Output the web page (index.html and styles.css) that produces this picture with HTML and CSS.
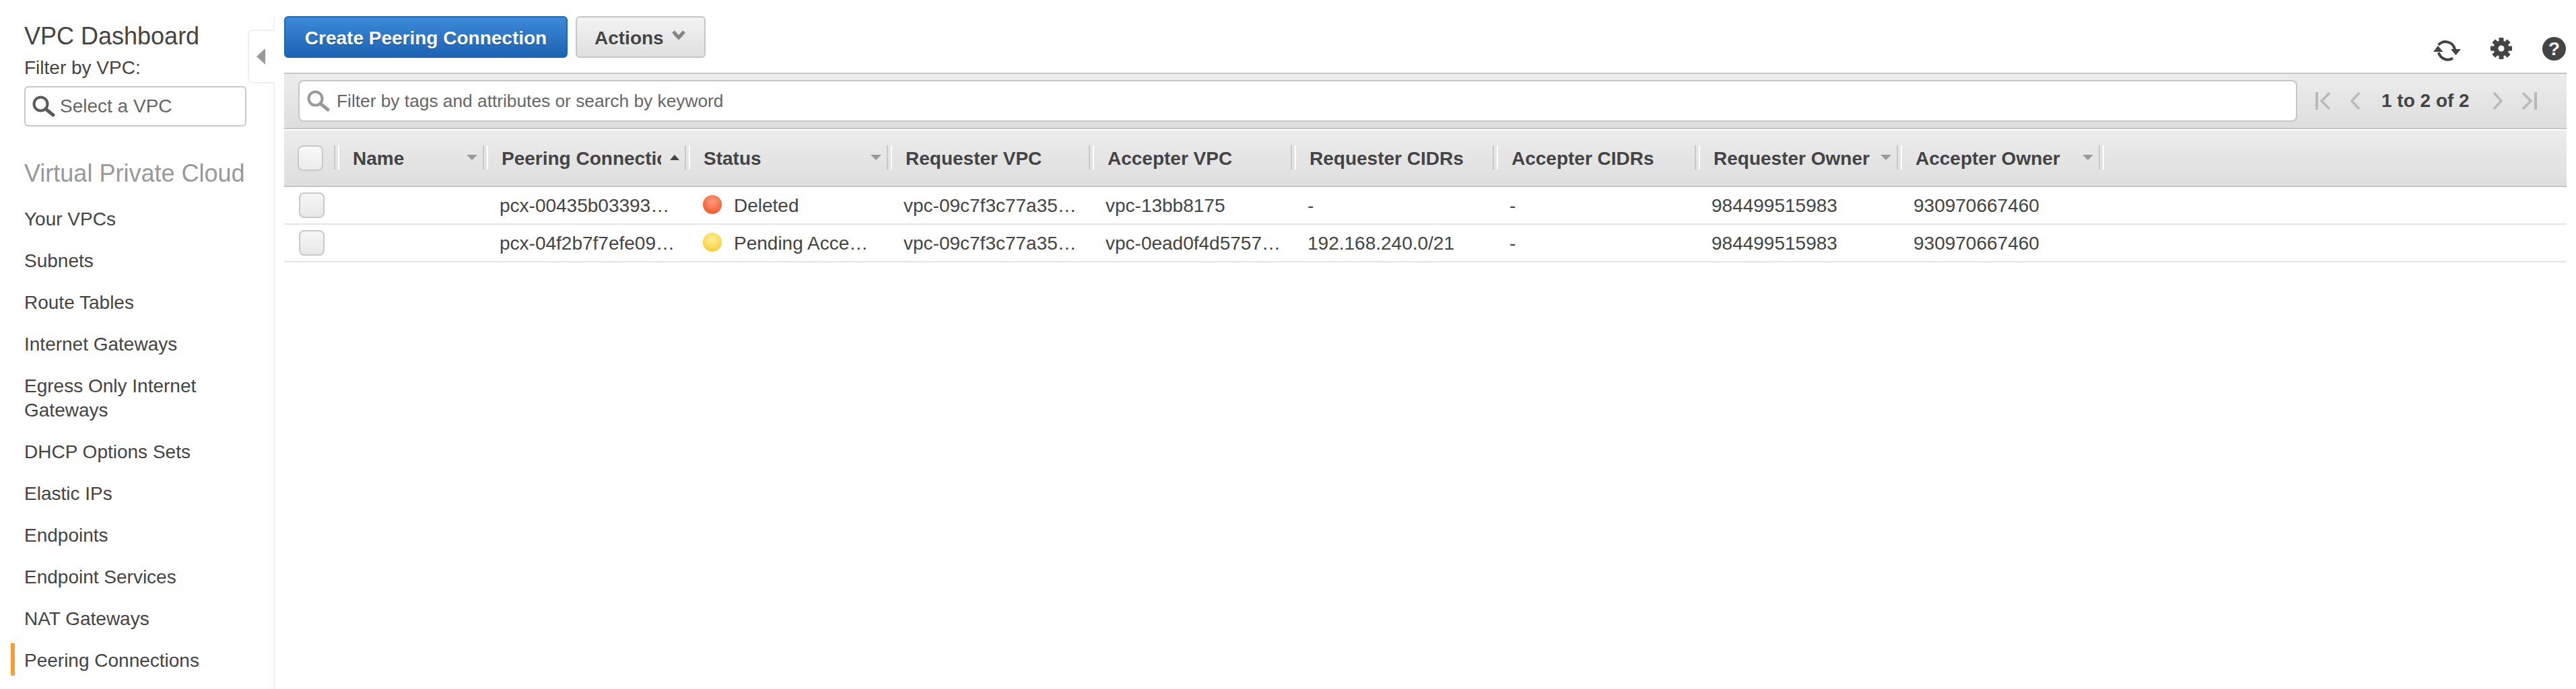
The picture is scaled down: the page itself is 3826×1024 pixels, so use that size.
FILE: index.html
```html
<!DOCTYPE html>
<html lang="en">
<head>
<meta charset="utf-8">
<title>Peering Connections</title>
<link rel="stylesheet" href="styles.css">
</head>
<body>
<aside class="sidebar">
  <h1 class="dash-title">VPC Dashboard</h1>
  <div class="filter-label">Filter by VPC:</div>
  <div class="vpc-select">
    <svg class="mag" viewBox="0 0 34 32"><circle cx="12.500" cy="12.500" r="10" fill="#fff" stroke="#5a5a5a" stroke-width="4"/><path d="M20 20l11 9" stroke="#5a5a5a" stroke-width="5" stroke-linecap="round"/></svg>
    <span>Select a VPC</span>
  </div>
  <h2 class="section-title">Virtual Private Cloud</h2>
  <nav class="nav">
    <a class="nav-item">Your VPCs</a>
    <a class="nav-item">Subnets</a>
    <a class="nav-item">Route Tables</a>
    <a class="nav-item">Internet Gateways</a>
    <a class="nav-item">Egress Only Internet Gateways</a>
    <a class="nav-item">DHCP Options Sets</a>
    <a class="nav-item">Elastic IPs</a>
    <a class="nav-item">Endpoints</a>
    <a class="nav-item">Endpoint Services</a>
    <a class="nav-item">NAT Gateways</a>
    <a class="nav-item active">Peering Connections</a>
  </nav>
  <div class="collapse-tab"><span class="collapse-arrow"></span></div>
</aside>
<main class="main">
  <div class="actions">
    <button class="btn primary">Create Peering Connection</button>
    <button class="btn secondary">Actions<svg class="caret" viewBox="0 0 20 14"><path d="M2 2l8 9 8-9" fill="none" stroke="#858585" stroke-width="5"/></svg></button>
    <div class="top-icons">
      <svg class="ic-refresh" viewBox="0 0 42 34"><path d="M8.700 9A14 14 0 0 1 33 15.500" fill="none" stroke="#444" stroke-width="4"/><path d="M9 20A14 14 0 0 0 30 28.500" fill="none" stroke="#444" stroke-width="4"/><path d="M27 15h15l-7.500 9zM1 19h14.500L8 10z" fill="#444"/></svg>
      <svg class="ic-gear" viewBox="0 0 32 32"><g fill="#444"><rect x="12.500" y="0" width="7" height="32" rx="1"/><rect x="12.500" y="0" width="7" height="32" rx="1" transform="rotate(45 16 16)"/><rect x="12.500" y="0" width="7" height="32" rx="1" transform="rotate(90 16 16)"/><rect x="12.500" y="0" width="7" height="32" rx="1" transform="rotate(135 16 16)"/><circle cx="16" cy="16" r="11.500"/></g><circle cx="16" cy="16" r="4.500" fill="#fff"/></svg>
      <span class="ic-help">?</span>
    </div>
  </div>
  <div class="filter-bar">
    <div class="filter-input">
      <svg class="mag" viewBox="0 0 34 32"><circle cx="12.500" cy="12.500" r="10" fill="#fff" stroke="#999" stroke-width="4"/><path d="M20 20l11 9" stroke="#999" stroke-width="5" stroke-linecap="round"/></svg>
      <span>Filter by tags and attributes or search by keyword</span>
    </div>
    <div class="pager">
      <svg class="pg" viewBox="0 0 24 28"><path d="M2 1v26" stroke="#b9b9b9" stroke-width="4"/><path d="M21 2L9 14l12 12" fill="none" stroke="#b9b9b9" stroke-width="3.500"/></svg>
      <svg class="pg pg-prev" viewBox="0 0 16 28"><path d="M14 2L3 14l11 12" fill="none" stroke="#b9b9b9" stroke-width="3.500"/></svg>
      <span class="pg-text">1 to 2 of 2</span>
      <svg class="pg pg-next" viewBox="0 0 16 28"><path d="M2 2l11 12L2 26" fill="none" stroke="#b9b9b9" stroke-width="3.500"/></svg>
      <svg class="pg" viewBox="0 0 24 28"><path d="M3 2l12 12L3 26" fill="none" stroke="#b9b9b9" stroke-width="3.500"/><path d="M22 1v26" stroke="#b9b9b9" stroke-width="4"/></svg>
    </div>
  </div>
  <div class="grid head">
    <div class="hcell check-cell"><span class="check head-check"></span></div>
    <div class="hcell"><span class="hlabel">Name</span><span class="sort"></span></div>
    <div class="hcell"><span class="hlabel">Peering Connection ID</span><span class="sort asc"></span></div>
    <div class="hcell"><span class="hlabel">Status</span><span class="sort"></span></div>
    <div class="hcell"><span class="hlabel">Requester VPC</span></div>
    <div class="hcell"><span class="hlabel">Accepter VPC</span></div>
    <div class="hcell"><span class="hlabel">Requester CIDRs</span></div>
    <div class="hcell"><span class="hlabel">Accepter CIDRs</span></div>
    <div class="hcell"><span class="hlabel">Requester Owner</span><span class="sort"></span></div>
    <div class="hcell"><span class="hlabel">Accepter Owner</span><span class="sort"></span></div>
  </div>
  <div class="grid row">
    <div class="cell check-cell"><span class="check"></span></div>
    <div class="cell"></div>
    <div class="cell">pcx-00435b03393…</div>
    <div class="cell"><span class="dot red"></span>Deleted</div>
    <div class="cell">vpc-09c7f3c77a35…</div>
    <div class="cell">vpc-13bb8175</div>
    <div class="cell">-</div>
    <div class="cell">-</div>
    <div class="cell">984499515983</div>
    <div class="cell">930970667460</div>
  </div>
  <div class="grid row">
    <div class="cell check-cell"><span class="check"></span></div>
    <div class="cell"></div>
    <div class="cell">pcx-04f2b7f7efe09…</div>
    <div class="cell"><span class="dot yellow"></span>Pending Acce…</div>
    <div class="cell">vpc-09c7f3c77a35…</div>
    <div class="cell">vpc-0ead0f4d5757…</div>
    <div class="cell">192.168.240.0/21</div>
    <div class="cell">-</div>
    <div class="cell">984499515983</div>
    <div class="cell">930970667460</div>
  </div>
</main>
</body>
</html>
```
FILE: styles.css
```css
* { box-sizing: border-box; }
html, body { margin: 0; height: 100%; overflow: hidden; }
body { display: flex; background: #fff; color: #444; font-family: "Liberation Sans", Arial, sans-serif; font-size: 28px; }

.sidebar { position: relative; flex: 0 0 408px; height: 1024px; padding: 33px 0 0 36px; }
.sidebar::after { content: ""; position: absolute; right: 0; top: 24px; bottom: 0; width: 2px; background: #f1f1f1; }
.dash-title { margin: 0; font-size: 36px; font-weight: 400; line-height: 42px; color: #444; }
.filter-label { margin-top: 8px; font-size: 28px; line-height: 36px; }
.vpc-select { display: flex; align-items: center; gap: 7px; width: 330px; height: 60px; margin-top: 9px; padding-left: 10px; border: 2px solid #c9c9c9; border-radius: 6px; font-size: 28px; color: #666; }
.mag { width: 34px; height: 32px; flex: none; }
.section-title { margin: 49px 0 0; font-size: 36px; font-weight: 400; line-height: 42px; color: #999; }
.nav { margin-top: 16px; }
.nav-item { position: relative; display: block; width: 300px; padding: 13px 0; font-size: 28px; line-height: 36px; color: #444; }
.nav-item.active::before { content: ""; position: absolute; left: -20px; top: 5px; width: 6px; height: 48px; background: #ff9a2e; }
.collapse-tab { position: absolute; z-index: 1; left: 368px; top: 44px; width: 40px; height: 80px; background: #fff; border: 2px solid #efefef; border-right: 0; border-radius: 8px 0 0 8px; display: flex; align-items: center; justify-content: center; }
.collapse-arrow { width: 0; height: 0; margin-right: 3px; border-style: solid; border-width: 12px 13px 12px 0; border-color: transparent #999 transparent transparent; }

.main { flex: 1; min-width: 0; padding: 24px 14px 0; }
.actions { display: flex; gap: 12px; height: 62px; position: relative; }
.btn { height: 62px; border-radius: 6px; font-family: inherit; font-size: 28px; font-weight: 700; padding: 3px 0 0; }
.primary { width: 421px; color: #fff; background: linear-gradient(#3c8ad9, #1c63b2); border: 2px solid #1f66b3; text-shadow: 0 1px 1px rgba(0,0,0,.35); }
.secondary { display: flex; align-items: center; gap: 12px; width: 193px; padding-left: 26px; color: #444; background: linear-gradient(#f3f3f3, #dfdfdf); border: 2px solid #c6c6c6; text-shadow: 0 1px 0 #fff; }
.caret { width: 20px; height: 14px; margin-top: -9px; }
.top-icons { margin-left: auto; margin-right: -14px; display: flex; align-items: center; position: relative; top: 30px; height: 36px; }
.ic-refresh { width: 42px; height: 34px; margin-right: 44px; position: relative; top: 3px; }
.ic-gear { width: 32px; height: 32px; margin-right: 45px; }
.ic-help { width: 35px; height: 35px; margin-right: 15px; border-radius: 50%; background: #444; color: #fff; font-size: 28px; font-weight: 700; line-height: 35px; text-align: center; }

.filter-bar { display: flex; align-items: center; height: 84px; margin-top: 22px; padding-left: 21px; background: linear-gradient(#ececec, #dedede); border-top: 2px solid #c6c6c6; border-bottom: 2px solid #c6c6c6; }
.filter-input { display: flex; align-items: center; gap: 10px; width: 2969px; height: 62px; padding-left: 11px; background: #fff; border: 2px solid #c6c6c6; border-radius: 8px; font-size: 26.300px; color: #666; }
.pager { display: flex; align-items: center; margin-left: 27px; }
.pg { width: 24px; height: 28px; }
.pg-prev { width: 16px; margin-left: 27px; }
.pg-next { width: 16px; margin-right: 26px; }
.pg-text { width: 196px; padding-left: 31px; font-weight: 700; font-size: 28px; white-space: nowrap; }

.grid { display: grid; grid-template-columns: 79px 221px repeat(8, 300px) 1fr; }
.head { height: 84px; margin-top: 2px; background: linear-gradient(#ececec, #dedede); border-bottom: 2px solid #c6c6c6; }
.hcell { position: relative; display: flex; align-items: center; padding-left: 23px; padding-top: 1px; font-weight: 700; font-size: 28px; }
.hcell::after { content: ""; position: absolute; right: -3px; top: 22px; width: 4px; height: 36px; border-left: 2px solid #c9c9c9; border-right: 2px solid #fff; }
.hlabel { display: block; max-width: 237px; overflow: hidden; white-space: nowrap; }
.sort { position: absolute; right: 13px; top: 36px; width: 0; height: 0; border-style: solid; border-width: 8px 8px 0; border-color: #999 transparent transparent; }
.sort.asc { border-width: 0 7px 8px; border-color: transparent transparent #444; }
.hcell.check-cell { padding-left: 20px; padding-top: 0; }
.check { display: block; width: 38px; height: 38px; border: 2px solid #c9c9c9; border-radius: 8px; background: linear-gradient(#f6f6f6, #e8e8e8); }
.head-check { background: linear-gradient(#f8f8f8, #ececec); }
.row { height: 56px; border-bottom: 2px solid #e4e4e4; }
.cell { display: flex; align-items: center; padding-left: 20px; padding-top: 2px; font-size: 28px; white-space: nowrap; overflow: hidden; }
.cell.check-cell { padding-left: 22px; padding-top: 0; }
.dot { flex: none; width: 28px; height: 28px; margin: -5px 18px 0 2px; border-radius: 50%; }
.red { background: radial-gradient(circle at 50% 35%, #ff9f80, #f7693e 60%, #dd4a20); }
.yellow { background: radial-gradient(circle at 50% 35%, #ffee99, #fdd84f 60%, #efb325); }
```
